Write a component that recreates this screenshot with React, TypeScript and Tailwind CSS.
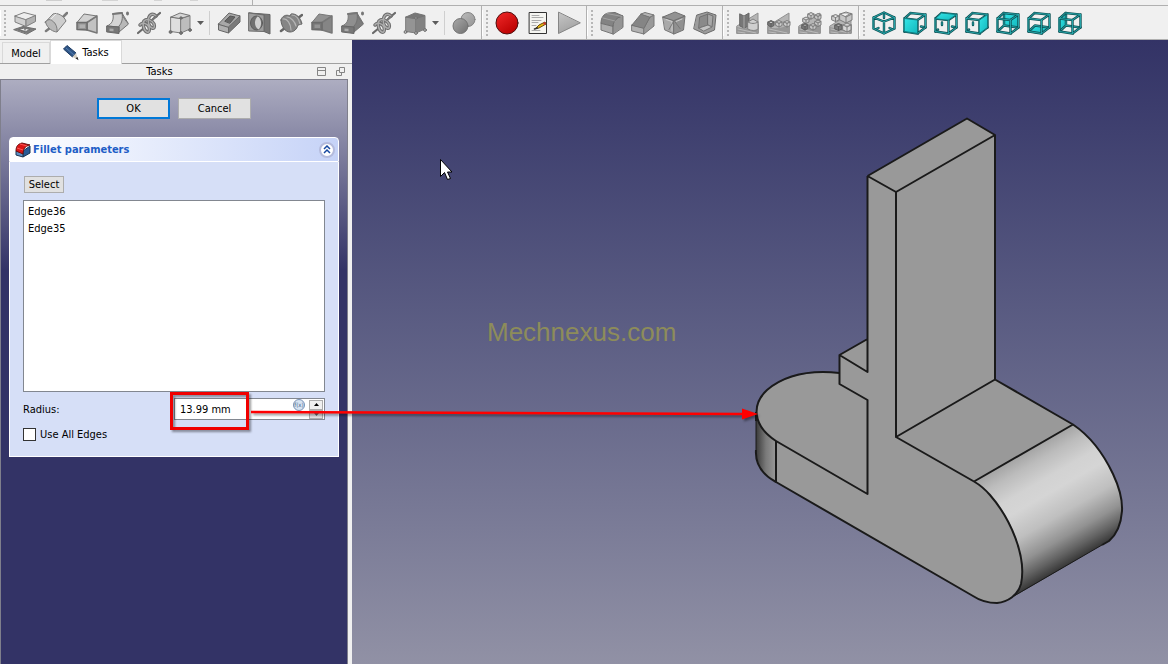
import React from 'react';

type Props = { children: React.ReactNode };

const Svg = ({ children }: Props) => (
  <svg viewBox="0 0 24 24" className="h-6 w-6" fill="none" strokeLinejoin="round" strokeLinecap="round" aria-hidden="true">
    {children}
  </svg>
);

/* Part design icons; the additive set is light, the subtractive set is darker */

const Pad = () => (
  <Svg>
    <path d="m1 18.500 9-3 13 2.500-9 5z" fill="#7d7d7d" stroke="#6e6e6e" />
    <path d="m6 18.500 5-1.500 6 1.500-4 2z" fill="#eee" stroke="#6e6e6e" />
    <path d="M12 15v4" stroke="#777" strokeWidth="1.500" />
    <path d="M2 5v6l11 4.500V8.500z" fill="#cfcfcf" stroke="#808080" />
    <path d="M13 8.500v7l9.500-5V4.500z" fill="#b2b2b2" stroke="#808080" />
    <path d="m2 5 9-3.500 11.500 3-9.500 4z" fill="#eee" stroke="#808080" />
  </Svg>
);

const Revolve = ({ dark }: { dark?: boolean }) => (
  <Svg>
    {dark ? (
      <g stroke="#666">
        <path d="M2 20 23 4" strokeWidth="2.500" />
        <path d="M2 9c1-4 5-6 9-4l1-2c5-1 10 4 11 10l-4 1c-1 4-4 7-8 7-5 0-9-6-9-12z" fill="#858585" />
        <path d="M4 8c4-1 8 5 8 11M8 6c4 0 8 5 9 9M13 4c4 0 7 4 8 9" stroke="#b5b5b5" strokeWidth="1.200" />
      </g>
    ) : (
      <g stroke="#7b7b7b">
        <path d="m2 20 4-3M19 6l4-4" strokeWidth="2.500" />
        <path d="M1.500 11 9 3c4-2 11 2 13 7l-9 11c-1-5-6-10-11.500-10z" fill="#cdcdcd" />
        <path d="M1.500 11c2-3 5-3 7-1 3 2 5 6 4.500 11C10 21 3 18 1.500 11z" fill="#b8b8b8" />
        <path d="m7 8 5-5" stroke="#eee" />
      </g>
    )}
  </Svg>
);

const Loft = ({ dark }: { dark?: boolean }) => (
  <Svg>
    <path d="M2 11.500 9 3l13 2-10 6.500z" fill={dark ? '#929292' : '#d2d2d2'} stroke="#777" />
    <path d="M12 11.500 22 5v17l-10-3z" fill={dark ? '#858585' : '#c2c2c2'} stroke="#777" strokeWidth="1.500" />
    <path d="M2 11.500h10V19l-10-.500z" fill={dark ? '#777' : '#959595'} stroke="#6c6c6c" strokeWidth="1.500" />
    <path d="M4.500 13.500H10v3.500H4.500z" fill={dark ? '#949494' : '#b0b0b0'} />
  </Svg>
);

const Pipe = ({ dark }: { dark?: boolean }) => (
  <Svg>
    <path d="M7 3c1 6-1 10-6 12l12 1 9-4-6-10z" fill={dark ? '#8f8f8f' : '#d4d4d4'} stroke="#777" />
    <path d="M16 2c1 5 4 8 6.500 11L13 21v-6c3-3 4-8 3-13z" fill={dark ? '#7d7d7d' : '#b8b8b8'} stroke="#717171" />
    <path d="m7 3 9-1" stroke="#777" strokeWidth="2" />
    <path d="M1 15l12 1v6.500L1 21z" fill="#777" stroke="#666" />
    <path d="m3.500 17.500 4 .3v2.500l-4-.3z" fill="#aaa" />
    <ellipse cx="21.500" cy="2.500" rx="1.500" ry="2" fill="#777" />
  </Svg>
);

const Helix = () => (
  <Svg>
    <path d="m1 22 6-5M16 8l7-6" stroke="#6a6a6a" strokeWidth="2.200" />
    <path d="M3 14c2-3 7-2 9 2 1 3 0 6-2 5-3-1-5-8-3-11 3-3 8-1 10 3 1 3 0 5-2 4-3-1-5-7-3-11 2-4 5-3 7-1" stroke="#6d6d6d" strokeWidth="3.500" />
    <path d="M3 14c2-3 7-2 9 2 1 3 0 6-2 5-3-1-5-8-3-11 3-3 8-1 10 3 1 3 0 5-2 4-3-1-5-7-3-11 2-4 5-3 7-1" stroke="#adadad" strokeWidth="1.500" />
    <path d="m15 9 5-4" stroke="#777" strokeWidth="2" />
  </Svg>
);

const Primitive = ({ dark }: { dark?: boolean }) => (
  <Svg>
    <path d="m3 6 10 1.500V22L3 20.500z" fill={dark ? '#949494' : '#dedede'} stroke="#7c7c7c" />
    <path d="m13 7.500 9-3V18l-9 4z" fill={dark ? '#828282' : '#bdbdbd'} stroke="#7c7c7c" />
    <path d="m3 6 9-4 10 2.500-9 3z" fill={dark ? '#777' : '#d6d6d6'} stroke="#747474" />
    <g fill={dark ? '#bcbcbc' : '#777'} stroke="#6c6c6c">
      <circle cx="2.500" cy="21" r="1.400" />
      <circle cx="13" cy="22" r="1.400" />
      <circle cx="22" cy="19" r="1.400" />
      <circle cx="13" cy="7" r="1.200" />
    </g>
  </Svg>
);

const Pocket = () => (
  <Svg>
    <path d="M1.500 13v6l10 3V16z" fill="#b0b0b0" stroke="#666" />
    <path d="M11.500 16v6L23 11V5z" fill="#7a7a7a" stroke="#666" />
    <path d="M1.500 13 12 2l11 3-11.500 11z" fill="#a8a8a8" stroke="#666" />
    <path d="m8 10 5-5 5 1-5 6z" fill="#666" stroke="#555" />
  </Svg>
);

const Hole = () => (
  <Svg>
    <path d="m1 2 21 1.500V23l-6-2.500V4z" fill="#777" stroke="#666" />
    <path d="m1 2 15 2v16.500L1 20z" fill="#9e9e9e" stroke="#6c6c6c" />
    <ellipse cx="8.500" cy="12" rx="6" ry="7" fill="#707070" stroke="#5c5c5c" />
    <path d="M9.500 5.500c4 1 5 10 1 13-4-2-5-9-1-13z" fill="#d0d0d0" />
  </Svg>
);

const Boolean = () => (
  <Svg>
    <circle cx="16" cy="8.500" r="7" fill="url(#ballBack)" stroke="#858585" />
    <circle cx="8.500" cy="15" r="7.500" fill="url(#ballFront)" stroke="#747474" />
    <defs>
      <linearGradient id="ballBack" x2="1" y2="1">
        <stop stopColor="#bbb" /><stop offset="1" stopColor="#959595" />
      </linearGradient>
      <linearGradient id="ballFront" x2="1" y2="1">
        <stop stopColor="#a9a9a9" /><stop offset="1" stopColor="#707070" />
      </linearGradient>
    </defs>
  </Svg>
);

const RecordIcon = () => (
  <Svg>
    <circle cx="12" cy="12" r="11" fill="url(#rec)" stroke="#4f1010" />
    <defs>
      <linearGradient id="rec" x2=".7" y2="1">
        <stop stopColor="#f22a2a" /><stop offset="1" stopColor="#ba0000" />
      </linearGradient>
    </defs>
  </Svg>
);

const MacroIcon = () => (
  <Svg>
    <path d="M3.500 1.500h17v21h-17z" fill="#f5f5f1" stroke="#333" strokeLinejoin="miter" />
    <path d="M6 4.500h7M6 6.500h11M6 9.500h9M6 11.500h6M6 14.500h4M6 19.500h8" stroke="#aaa" />
    <path d="m10 17 3-3 6-3 1 2-7 4z" fill="#e5b910" stroke="#6b4a0b" />
    <path d="m17 12 2-1 1 2-2 1z" fill="#c33" />
    <path d="m8.500 18 3-1" stroke="#333" strokeWidth="1.500" />
  </Svg>
);

const PlayIcon = () => (
  <Svg>
    <path d="M1.500 1.500v21L23 12z" fill="url(#play)" stroke="#858585" />
    <defs>
      <linearGradient id="play" x2=".4" y2="1">
        <stop stopColor="#c6c6c6" /><stop offset="1" stopColor="#a2a2a2" />
      </linearGradient>
    </defs>
  </Svg>
);

const FilletIcon = () => (
  <Svg>
    <path d="M1 12v7l12 4v-8z" fill="#adadad" stroke="#777" />
    <path d="M13 23v-8c0-5 4-9 10-10v11z" fill="#949494" stroke="#737373" />
    <path d="M1 12c0-6 3-9 7-10l7-.5L23 5c-6 1-10 5-10 10z" fill="#838383" stroke="#707070" />
    <path d="m7 2.500 15 3M3 7l12 3" stroke="#a2a2a2" />
  </Svg>
);

const ChamferIcon = () => (
  <Svg>
    <path d="m1 14 12 3v6L1 20z" fill="#b2b2b2" stroke="#777" />
    <path d="m13 17 6-11 4-2v11l-10 8z" fill="#999" stroke="#777" />
    <path d="m1 14 9-11 9 3-6 11z" fill="#858585" stroke="#737373" />
    <path d="m10 3 4-1.500L23 4l-4 2z" fill="#b5b5b5" stroke="#777" />
  </Svg>
);

const DraftIcon = () => (
  <Svg>
    <path d="m1 6 11 3.500V23L3 19z" fill="#a9a9a9" stroke="#777" />
    <path d="M12 9.500 23 5l-1.500 14-9.500 4z" fill="#919191" stroke="#737373" />
    <path d="m1 6 12-5 10 4-11 4.500z" fill="#929292" stroke="#6f6f6f" />
    <path d="m4 8.500 6 2v9.500M20 8l-6 2.500" stroke="#cfcfcf" />
    <path d="m12 9.500-5 9M12 9.500l6 8" stroke="#777" />
  </Svg>
);

const ThicknessIcon = () => (
  <Svg>
    <path d="M4 4 14 1l9 3-1.500 15-9.500 4-11-5z" fill="#9c9c9c" stroke="#6c6c6c" />
    <path d="m7 6 8-3v11l-9 3z" fill="#8a8a8a" stroke="#707070" />
    <path d="m15 3 5 2-1 11-4-2z" fill="#a8a8a8" stroke="#707070" />
    <path d="m6 17 9-3 4 2-8 4z" fill="#c3c3c3" stroke="#777" />
  </Svg>
);

const Ground = () => (
  <>
    <path d="M1 15 22 2v20.500H1z" fill="#b5b5b5" stroke="#909090" />
    <path d="M1 16c7 2 13 2 22-3v9.500H1z" fill="#979797" />
    <path d="m2 18 18 4M2 21l7 1" stroke="#bbb" />
  </>
);

const MirrorIcon = () => (
  <Svg>
    <Ground />
    <path d="m4 3 4 2 5-3v13l-5 2-4-2z" fill="#777" stroke="#666" />
    <path d="M8 5v12" stroke="#aaa" />
    <path d="m12 11 5-3 5 3v7c-2 2-7 2-10 0z" fill="#cfcfcf" stroke="#808080" />
    <path d="M12 11c3 2 7 2 10 0" stroke="#808080" />
  </Svg>
);

const LinearIcon = () => (
  <Svg>
    <Ground />
    <path d="m1 11 3-1.500L7 11v3.500L4 16l-3-1.500zM1 11l3 1.500L7 11M4 12.500V16" fill="#777" stroke="#5f5f5f" />
    <path d="m9 11 3-1.500 3 1.500v3.500L12 16l-3-1.500zM9 11l3 1.500 3-1.500M12 12.500V16" fill="#cfcfcf" stroke="#7c7c7c" />
    <path d="m17 11 3-1.500 3 1.500v3.500L20 16l-3-1.500zM17 11l3 1.500 3-1.500M20 12.500V16" fill="#cfcfcf" stroke="#7c7c7c" />
  </Svg>
);

const PolarIcon = () => (
  <Svg>
    <Ground />
    <g fill="#c9c9c9" stroke="#7c7c7c">
      <path d="m10 3 3-1.500L16 3v3.500L13 8l-3-1.500zM10 3l3 1.500L16 3M13 4.500V8" />
      <path d="m17 4 3-1.500L23 4v3.500L20 9l-3-1.500zM17 4l3 1.500L23 4M20 5.500V9" />
      <path d="m5 7.500 3-1.500 3 1.500V11l-3 1.500L5 11zM5 7.500 8 9l3-1.500M8 9v3.500" />
      <path d="m17 10.500 3-1.500 3 1.500V14l-3 1.500-3-1.500zM17 10.500l3 1.500 3-1.500M20 12v3.500" />
      <path d="m12 14 3-1.500 3 1.500v3.500L15 19l-3-1.500zM12 14l3 1.500 3-1.500M15 15.500V19" />
    </g>
    <path d="m4 14 3-1.500 3 1.500v3.500L7 19l-3-1.500zM4 14l3 1.500 3-1.500M7 15.500V19" fill="#777" stroke="#5f5f5f" />
  </Svg>
);

const MultiIcon = () => (
  <Svg>
    <Ground />
    <path d="m11 3 6-2 6 2v6l-6 3-6-3zM11 3l6 3 6-3M17 6v6" fill="#c6c6c6" stroke="#7c7c7c" />
    <path d="m3 5 3.500-1.500L10 5v4l-3.500 1.500L3 9zM3 5l3.500 1.500L10 5M6.500 6.500v4" fill="#cfcfcf" stroke="#7c7c7c" />
    <path d="m6 14 3.500-1.500L13 14v4l-3.500 1.500L6 18zM6 14l3.500 1.500L13 14M9.500 15.500v4" fill="#7a7a7a" stroke="#5f5f5f" />
    <path d="m14 14 4-2 4 2v5l-4 2-4-2zM14 14l4 2 4-2M18 16v5" fill="#d6d6d6" stroke="#7c7c7c" />
  </Svg>
);

/* Standard view cubes: a wire frame with one face filled in */

const frame = 'M1.500 7.500 14.500 9v13.500L1.500 20.500zM1.500 7.500l6-5.500 15 1.500v13l-8 6M14.500 9l8-5.500';
const hidden = 'M8 11.500v2.500M1.500 20.500 4 18.500M18 15.500l4.500 1';

const Wire = ({ d }: { d: string }) => (
  <>
    <path d={d} stroke="#0d5255" strokeWidth="2.400" strokeLinejoin="miter" />
    <path d={d} stroke="#2cb9bd" strokeWidth=".8" />
  </>
);

const ViewCube = ({ face, solid, inner }: { face: string; solid?: boolean; inner?: string }) => (
  <Svg>
    {!solid && <path d={face} fill="url(#teal)" stroke="#0d5255" />}
    <Wire d={inner ?? hidden} />
    <Wire d={frame} />
    {solid && <path d={face} fill="url(#teal)" stroke="#0d6b6f" strokeWidth=".8" />}
    <defs>
      <linearGradient id="teal" x2="1" y2="1">
        <stop stopColor="#35e5e7" /><stop offset="1" stopColor="#12b8bd" />
      </linearGradient>
    </defs>
  </Svg>
);

const IsoCube = () => (
  <Svg>
    <Wire d="M12 2v5M4 18l2.500-1M17.500 17l2.500 1" />
    <Wire d="M1.500 6.500 12 1.500l10.500 5v11L12 22.500l-10.500-5zM1.500 6.500 12 10.500l10.500-4M12 10.500v12" />
  </Svg>
);

const Tool = ({ label, children }: { label: string; children: React.ReactNode }) => (
  <button aria-label={label} className="flex h-8 w-[31px] items-center justify-center">{children}</button>
);

const Drop = ({ label }: { label: string }) => (
  <button aria-label={label} className="flex h-8 w-[11px] items-center justify-center">
    <svg viewBox="0 0 7 4" className="h-1 w-[7px]"><path d="M0 0h7L3.500 4z" fill="#5c5c5c" /></svg>
  </button>
);

const Separator = () => <div className="mx-[3px] h-6 w-px bg-[#cfcfcf]" />;

const Group = ({ children }: Props) => (
  <div className="flex h-full shrink-0 items-center border-r border-[#b0b0b0] pr-[2px]">
    <div className="flex w-[9px] flex-col items-center gap-[2px] border-l border-white">
      {[0, 1, 2, 3, 4, 5, 6].map((i) => <i key={i} className="h-[2px] w-[2px] bg-[#b7b7b7]" />)}
    </div>
    {children}
  </div>
);

const Toolbar = () => (
  <header className="bg-[#f0f0f0]">
    <div className="flex h-[6px] border-b border-[#b0b0b0]">
      <div className="flex w-[253px] gap-4 border-r border-[#b0b0b0] pl-[46px]">
        <i className="h-px w-4 bg-[#cfcfcf]" /><i className="ml-6 h-px w-4 bg-[#d4d4d4]" />
        <i className="ml-5 h-px w-2 bg-[#d4d4d4]" /><i className="ml-3 h-px w-2 bg-[#d4d4d4]" />
      </div>
    </div>
    <div className="flex h-[34px] items-center overflow-hidden border-b border-[#b0b0b0]">
      <Group>
        <Tool label="Pad"><Pad /></Tool>
        <Tool label="Revolution"><Revolve /></Tool>
        <Tool label="Additive loft"><Loft /></Tool>
        <Tool label="Additive pipe"><Pipe /></Tool>
        <Tool label="Additive helix"><Helix /></Tool>
        <Tool label="Additive primitive"><Primitive /></Tool>
        <Drop label="More additive primitives" />
        <Separator />
        <Tool label="Pocket"><Pocket /></Tool>
        <Tool label="Hole"><Hole /></Tool>
        <Tool label="Groove"><Revolve dark /></Tool>
        <Tool label="Subtractive loft"><Loft dark /></Tool>
        <Tool label="Subtractive pipe"><Pipe dark /></Tool>
        <Tool label="Subtractive helix"><Helix /></Tool>
        <Tool label="Subtractive primitive"><Primitive dark /></Tool>
        <Drop label="More subtractive primitives" />
        <Separator />
        <Tool label="Boolean operation"><Boolean /></Tool>
      </Group>
      <Group>
        <Tool label="Record macro"><RecordIcon /></Tool>
        <Tool label="Macros"><MacroIcon /></Tool>
        <Tool label="Execute macro"><PlayIcon /></Tool>
      </Group>
      <Group>
        <Tool label="Fillet"><FilletIcon /></Tool>
        <Tool label="Chamfer"><ChamferIcon /></Tool>
        <Tool label="Draft"><DraftIcon /></Tool>
        <Tool label="Thickness"><ThicknessIcon /></Tool>
      </Group>
      <Group>
        <Tool label="Mirrored"><MirrorIcon /></Tool>
        <Tool label="Linear pattern"><LinearIcon /></Tool>
        <Tool label="Polar pattern"><PolarIcon /></Tool>
        <Tool label="Multi transform"><MultiIcon /></Tool>
      </Group>
      <div className="flex h-full shrink-0 items-center">
        <div className="flex w-[9px] flex-col items-center gap-[2px] border-l border-white">
          {[0, 1, 2, 3, 4, 5, 6].map((i) => <i key={i} className="h-[2px] w-[2px] bg-[#b7b7b7]" />)}
        </div>
        <Tool label="Isometric"><IsoCube /></Tool>
        <Tool label="Front"><ViewCube solid face="M1.500 7.500 14.500 9v13.500L1.500 20.500z" /></Tool>
        <Tool label="Top"><ViewCube solid face="m1.500 7.500 6-5.500 15 1.500-8 5.500z" /></Tool>
        <Tool label="Right"><ViewCube solid face="m14.500 9 8-5.500v13l-8 6z" /></Tool>
        <Tool label="Rear"><ViewCube face="m8 2 14.500 1.500v13L8 14.500z" inner="M8 2v12.500l-6.500 6M8 14.500l14.500 2" /></Tool>
        <Tool label="Bottom"><ViewCube face="m1.500 20.500 6.500-6 14.500 2-8 6z" inner="M8 14.500l14.500 2M8 14.500l-6.500 6" /></Tool>
        <Tool label="Left"><ViewCube face="M1.500 7.500 8 2v12.500l-6.500 6z" inner="M8 2v12.500l14.500 2M8 14.500l-6.500 6" /></Tool>
      </div>
    </div>
  </header>
);

const FilletBadge = () => (
  <svg viewBox="0 0 16 16" className="h-4 w-4" aria-hidden="true">
    <path d="m8 9 7-5v7l-7 4z" fill="#285b96" stroke="#193453" />
    <path d="m1 9 7 2v4l-7-2z" fill="#5e91c4" stroke="#193453" />
    <path d="M1 9c0-5 2-7 6-8l8 2C10 4 8 7 8 12z" fill="#db1616" stroke="#691010" />
    <path d="m2 6 6 2M5 2l7 2" stroke="#ff5757" />
  </svg>
);

const PencilIcon = () => (
  <svg viewBox="0 0 16 16" className="h-4 w-4" aria-hidden="true">
    <path d="M.500 4 4 .500l9 7.500L9.500 12z" fill="#2f5586" stroke="#1c3b63" />
    <path d="m3 3 8 7" stroke="#5580b3" />
    <path d="M9.500 12 13 8l2 6.500z" fill="#d6d0c4" />
    <path d="m12.500 13.300 3 1.900-1-3.200z" fill="#222" />
  </svg>
);

/* Red frame with an arrow that leads from the radius to the rounded edge */
const RadiusCallout = () => (
  <svg
    width="596" height="50" viewBox="166 386 596 50" fill="none" aria-hidden="true"
    className="pointer-events-none absolute -left-[9px] -top-[13px] z-10 max-w-none drop-shadow-[2px_2px_1px_rgba(0,0,0,0.4)]"
  >
    <path d="M171.500 393.500h76v35h-76z" stroke="#f00000" strokeWidth="3" />
    <path d="m251 412 491 2" stroke="#f00" strokeWidth="2.500" />
    <path d="m742 408.500 16 5.500-16 5.500z" fill="#f00" />
  </svg>
);

const TaskPanel = () => (
  <aside className="flex w-[352px] shrink-0 flex-col bg-[#f0f0f0] pr-1">
    <div className="-mr-1 flex h-6 items-end border-b border-[#a0a0a0] pl-[2px]" role="tablist">
      <button role="tab" aria-selected="false" className="h-[21px] w-12 border border-b-0 border-[#d9d9d9] bg-[#f0f0f0]">Model</button>
      <button role="tab" aria-selected="true" className="-mb-px flex h-6 w-[72px] items-center justify-center gap-[3px] border border-b-0 border-[#d9d9d9] bg-white"><PencilIcon />Tasks</button>
    </div>
    <div className="flex h-[15px] items-center">
      <h1 className="flex-1 pl-[2px] text-center">Tasks</h1>
      <div className="flex gap-[10px] pr-[3px]">
        <button aria-label="Minimize">
          <svg viewBox="0 0 9 9" className="h-[9px] w-[9px]" fill="none" stroke="#858585"><path d="M.5.5h8v8h-8zM0 3.500h9" /></svg>
        </button>
        <button aria-label="Float">
          <svg viewBox="0 0 9 9" className="h-[9px] w-[9px]" fill="none" stroke="#858585"><path d="M3.500.5h5v5h-5zM3 3.500H.5v5h5V6" /></svg>
        </button>
      </div>
    </div>
    <div className="flex-1 border border-b-0 border-[#7f7f8c] bg-[#333366] bg-[linear-gradient(#adadc1,#333366_190px)] px-2 pt-[18px]">
      <div className="flex justify-center gap-2">
        <button className="h-[21px] w-[73px] border-2 border-[#0078d7] bg-[#e1e1e1]">OK</button>
        <button className="h-[21px] w-[73px] border border-[#adadad] bg-[#e1e1e1]">Cancel</button>
      </div>
      <section className="mt-[18px]">
        <div className="flex h-[25px] items-center gap-[2px] rounded-t-[4px] border border-white bg-linear-to-r from-white to-[#c6d3f7] pr-[3px] pl-[5px]">
          <FilletBadge />
          <h2 className="flex-1 font-bold text-[#215dc6]">Fillet parameters</h2>
          <button aria-label="Collapse" className="flex h-4 w-4 items-center justify-center rounded-full border-2 border-[#b4bbdc] bg-white">
            <svg viewBox="0 0 8 9" className="h-[9px] w-2 shrink-0" fill="none" stroke="#1648a0" strokeWidth="1.500"><path d="m1 4 3-3 3 3M1 8l3-3 3 3" /></svg>
          </button>
        </div>
        <div className="border border-t-0 border-white bg-[#d6dff7] px-[13px] pt-[14px] pb-[15px]">
          <button className="ml-px flex h-[17px] w-10 items-center justify-center border border-[#adadad] bg-[#e1e1e1]">Select</button>
          <ul className="mt-[7px] h-48 border border-[#828790] bg-white px-1 py-[2px] leading-[17px]">
            <li>Edge36</li>
            <li>Edge35</li>
          </ul>
          <div className="mt-[6px] flex h-[22px] items-center">
            <label htmlFor="radius" className="flex-1">Radius:</label>
            <div className="relative flex h-[22px] w-[151px] items-center border border-[#828790] bg-white pr-px">
              <input id="radius" defaultValue="13.99 mm" className="w-full min-w-0 flex-1 bg-transparent pl-[5px] outline-none" />
              <button aria-label="Expression" className="mr-1 mb-2 flex h-3 w-3 shrink-0 items-center justify-center rounded-full border border-[#7891b5] bg-[#d7e4f2] text-[6px] leading-none text-[#46638a]">f(x)</button>
              <div className="flex w-[14px] shrink-0 flex-col">
                <button aria-label="Increase" className="flex h-[10px] items-center justify-center border border-[#adadad] bg-[#f0f0f0]">
                  <svg viewBox="0 0 5 3" className="h-[3px] w-[5px]"><path d="M0 3h5L2.500 0z" /></svg>
                </button>
                <button aria-label="Decrease" className="flex h-[9px] items-center justify-center border border-[#adadad] bg-[#e3e3e3]">
                  <svg viewBox="0 0 5 3" className="h-[3px] w-[5px]"><path d="M0 0h5L2.500 3z" fill="#666" /></svg>
                </button>
              </div>
              <RadiusCallout />
            </div>
          </div>
          <label className="mt-2 flex h-[13px] items-center gap-1">
            <input type="checkbox" className="h-[13px] w-[13px] appearance-none border border-[#333] bg-white checked:bg-[#0078d7]" />
            Use All Edges
          </label>
        </div>
      </section>
    </div>
  </aside>
);

const Model = () => (
  <svg
    width="816" height="624" viewBox="352 40 816 624" className="block max-w-none"
    fill="none" stroke="#1a1a1a" strokeWidth="2" strokeLinejoin="round" role="img" aria-label="Bracket with rounded ends"
  >
    <defs>
      <linearGradient id="barrel" gradientUnits="userSpaceOnUse" x1="974" y1="481" x2="1034" y2="585">
        <stop stopColor="#a3a3a3" /><stop offset=".12" stopColor="#bcbcbc" /><stop offset=".28" stopColor="#d2d2d2" />
        <stop offset=".4" stopColor="#d5d5d5" /><stop offset=".6" stopColor="#bfbfbf" /><stop offset=".78" stopColor="#929292" />
        <stop offset=".9" stopColor="#626262" /><stop offset="1" stopColor="#353535" />
      </linearGradient>
      <linearGradient id="nose" gradientUnits="userSpaceOnUse" x1="756" y1="0" x2="776" y2="0">
        <stop stopColor="#3a3a3a" /><stop offset=".5" stopColor="#7a7a7a" /><stop offset="1" stopColor="#999" />
      </linearGradient>
    </defs>
    <path
      stroke="none" fill="#999"
      d="M967 118 995 135V379l78 46-99 57C998 495 1023 535 1023 570 1022 597 1000 612 973 596L776 482 756 412C758 388 790 369 839 373V355l29-16V176z"
    />
    <path
      stroke="none" fill="url(#barrel)"
      d="M974 481.500 1073 424.500C1090 436 1104 455 1113 474 1121 491 1122.500 502 1122 511 1121 525 1116 535 1109 541L1102 545 1013 597C1021 590 1023 579 1023 569 1021 535 998 495 974 481.500z"
    />
    <path stroke="none" fill="url(#nose)" d="M756 412C757 423 764 434 776 441V482C763 474 755 464 756 453z" />
    <path d="M867.500 176 967 118.500l28 16.500V379.500M867.500 176 896 192l99-57M896 192V437l99-57.500M867.500 176V372L839.500 355 867.500 339M839.500 355v29l28 16v94L776 441v41" />
    <path d="M839.500 373C812 370 786 374 767 390 751 405 753 426 776 441M756 412v9M756 450C755 464 763 475 776 482L973 596C979 600 987 603 997 603 1008 602 1018 595 1021 584 1027 556 1010 518 990 495 983 487 980 485 974 481.500L896 437M995 379.500 1073 424.500 974 481.500" />
    <path d="M756 421v29" strokeWidth="1" />
    <path d="M1073 424.500C1090 436 1104 455 1113 474 1121 491 1122.500 502 1122 511 1121 525 1116 535 1109 541L1102 545" />
    <path d="M1102 545 1014 596" strokeWidth="1" />
  </svg>
);

export default function App() {
  return (
    <div className="flex min-h-screen flex-col overflow-hidden bg-[#f0f0f0] font-['DejaVu_Sans_Condensed','DejaVu_Sans',sans-serif] text-[11px] leading-[17px] text-black">
      <Toolbar />
      <div className="flex flex-1">
        <TaskPanel />
        <main className="relative min-w-0 flex-1 overflow-hidden bg-linear-to-b from-[#333366] to-[#9191a5]">
          <Model />
          <p className="absolute top-[277px] left-[135px] font-['Liberation_Sans',sans-serif] text-[26px] leading-[30px] text-[#8d8c5a]">Mechnexus.com</p>
          <svg viewBox="0 0 13 22" width="13" height="22" className="absolute top-[119px] left-[88px]" aria-hidden="true">
            <path d="M.5.5v17l4-4 3 7 3-1-3-6.500H12z" fill="#fff" stroke="#000" />
          </svg>
        </main>
      </div>
    </div>
  );
}
